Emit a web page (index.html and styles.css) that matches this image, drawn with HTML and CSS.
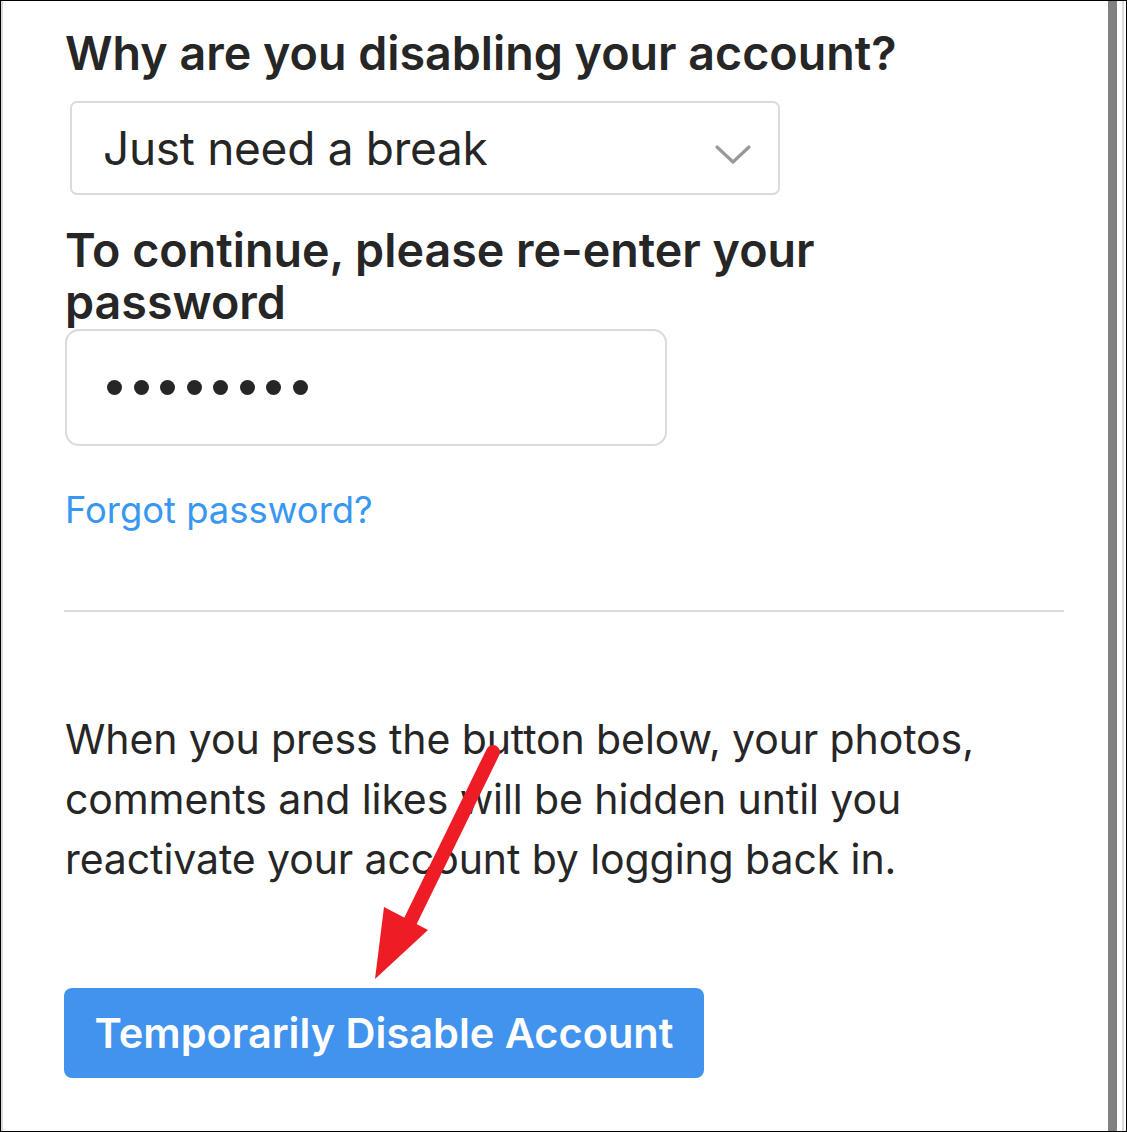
FILE: index.html
```html
<!DOCTYPE html>
<html lang="en">
<head>
<meta charset="utf-8">
<title>Disable account</title>
<link rel="stylesheet" href="styles.css">
</head>
<body>
<div class="frame">
  <main class="content">
    <h2 class="label">Why are you disabling your account?</h2>
    <div class="select">
      <span class="select-text">Just need a break</span>
      <svg class="chevron" width="36" height="22" viewBox="0 0 36 22" aria-hidden="true"><path d="M2 3 L18 18 L34 3" fill="none" stroke="#999" stroke-width="3.2" stroke-linecap="round" stroke-linejoin="round"/></svg>
    </div>
    <h2 class="label label-two">To continue, please re-enter your password</h2>
    <div class="password">
      <span class="dot"></span><span class="dot"></span><span class="dot"></span><span class="dot"></span><span class="dot"></span><span class="dot"></span><span class="dot"></span><span class="dot"></span>
    </div>
    <a class="forgot" href="#">Forgot password?</a>
    <hr class="divider">
    <p class="note">When you press the button below, your photos, comments and likes will be hidden until you reactivate your account by logging back in.</p>
    <button class="disable" type="button">Temporarily Disable Account</button>
    <svg class="arrow" width="140" height="250" viewBox="0 0 140 250" aria-hidden="true">
      <path d="M127 12 L40 190" fill="none" stroke="#ee1c25" stroke-width="14" stroke-linecap="round"/>
      <polygon points="18,167 62,190 9,239" fill="#ee1c25"/>
    </svg>
  </main>
  <div class="scrollbar"><div class="thumb"></div><div class="track-line"></div></div>
</div>
</body>
</html>
```

FILE: styles.css
```css
html, body {
  margin: 0;
  padding: 0;
  background: #ffffff;
}

.frame {
  box-sizing: border-box;
  width: 1127px;
  height: 1132px;
  border: 1px solid #000000;
  display: flex;
  background: #ffffff;
  overflow: hidden;
}

.content {
  position: relative;
  flex: 1;
  border-left: 2px solid #d9d9d9;
  padding: 24px 44px 0 63px;
  font-family: Inter, "Noto Sans", "Liberation Sans", sans-serif;
  color: #262626;
}

.label {
  margin: 0 0 0 -1px;
  font-size: 46.6px;
  line-height: 56px;
  font-weight: 600;
  letter-spacing: 0;
}

.label-two {
  margin-top: 29px;
  line-height: 52px;
  max-width: 860px;
}

.select {
  box-sizing: border-box;
  margin: 20px 0 0 4px;
  width: 710px;
  height: 94px;
  border: 2px solid #dbdbdb;
  border-radius: 7px;
  display: flex;
  align-items: center;
  justify-content: space-between;
  padding: 0 27px 0 31px;
}

.select-text {
  font-size: 46px;
  font-weight: 400;
  letter-spacing: -0.3px;
}

.chevron {
  display: block;
  margin-top: 14px;
}

.password {
  box-sizing: border-box;
  margin: 1px 0 0 -1px;
  width: 602px;
  height: 117px;
  border: 2px solid #dbdbdb;
  border-radius: 14px;
  display: flex;
  align-items: center;
  gap: 11.5px;
  padding-left: 40px;
}

.dot {
  width: 15px;
  height: 15px;
  border-radius: 50%;
  background: #262626;
}

.forgot {
  display: block;
  margin: 42px 0 0 -1px;
  font-size: 36.4px;
  line-height: 44px;
  color: #3897f0;
  text-decoration: none;
}

.divider {
  margin: 78px 0 0 -2px;
  border: 0;
  height: 2px;
  background: #dbdbdb;
}

.note {
  margin: 97px 0 0 -1px;
  font-size: 41px;
  line-height: 60px;
  letter-spacing: -0.1px;
  max-width: 960px;
}

.disable {
  display: block;
  margin: 99px 0 0 -2px;
  width: 640px;
  height: 90px;
  border: 0;
  border-radius: 8px;
  background: #4193ee;
  color: #ffffff;
  font-family: Inter, "Noto Sans", "Liberation Sans", sans-serif;
  font-size: 41.5px;
  font-weight: 600;
  padding: 0;
}

.arrow {
  position: absolute;
  left: 363px;
  top: 739px;
}

.scrollbar {
  display: flex;
  width: 18px;
  gap: 5px;
}

.thumb {
  width: 9px;
  background: #808080;
}

.track-line {
  width: 2px;
  background: #dcdcdc;
}
```
